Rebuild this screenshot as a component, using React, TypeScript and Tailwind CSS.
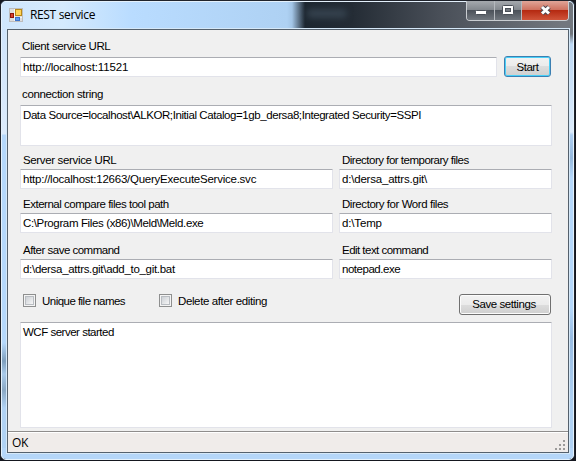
import type { ReactNode } from "react";

function Label({ children, className = "" }: { children: ReactNode; className?: string }) {
  return <div className={`whitespace-pre leading-[14px] ${className}`}>{children}</div>;
}

function Box({ children, className = "" }: { children?: ReactNode; className?: string }) {
  return (
    <div
      className={`whitespace-pre rounded-[1px] border border-[#e2e3ea] border-t-[#abadb3] bg-white pl-[2px] pt-[2px] leading-[14px] ${className}`}
    >
      {children}
    </div>
  );
}

function CheckBox() {
  return (
    <span className="block h-[13px] w-[13px] border border-[#8e8f8f] bg-[#f4f4f4] p-[1px]">
      <span className="block h-[9px] w-[9px] border border-[#b9bdc2] bg-linear-to-br from-[#cdd1d6] to-[#f6f6f6]" />
    </span>
  );
}

function FormIcon() {
  return (
    <svg width="14" height="14" viewBox="0 0 14 14" className="block">
      <rect x="0.5" y="0.5" width="13" height="13" fill="#dedede" stroke="#bdbdbd" />
      <path d="M5.5 1V13M1 9.5H13" stroke="#f4f4f4" />
      <rect x="1.5" y="5.5" width="3" height="4" fill="#d8402c" stroke="#8e140c" />
      <rect x="6.5" y="1.5" width="6" height="6" fill="#ffd358" stroke="#b98a17" />
      <rect x="6.5" y="9.5" width="4" height="3" fill="#5e9bf0" stroke="#3c74cc" />
    </svg>
  );
}

function CaptionButtons() {
  return (
    <div className="flex h-[20px] w-[103px] overflow-hidden rounded-b-[4px] border border-t-0 border-[#c9cdd1]">
      <div className="flex w-[28px] justify-center border-r border-[#b5b9be] bg-[linear-gradient(#a5a9ae_0,#84898f_45%,#4c525a_50%,#70767d_100%)]">
        <svg width="12" height="20" viewBox="0 0 12 20"><rect x="0.5" y="9.5" width="11" height="4" rx="1" fill="#fff" stroke="#4a5058" /></svg>
      </div>
      <div className="flex w-[27px] justify-center border-r border-[#b5b9be] bg-[linear-gradient(#a5a9ae_0,#84898f_45%,#4c525a_50%,#70767d_100%)]">
        <svg width="12" height="20" viewBox="0 0 12 20"><rect x="0.5" y="4.5" width="11" height="9" rx="1" fill="#fff" stroke="#4a5058" /><rect x="3.5" y="7.5" width="5" height="3" fill="#73787f" stroke="#4a5058" /></svg>
      </div>
      <div className="flex flex-1 justify-center bg-[linear-gradient(#e0a598_0,#cf7361_45%,#b52a12_50%,#d0543a_100%)]">
        <svg width="13" height="20" viewBox="0 0 13 20">
          <path d="M3 6L10 12.5M10 6L3 12.5" stroke="#4c4650" strokeWidth="5" />
          <path d="M3 6L10 12.5M10 6L3 12.5" stroke="#fff" strokeWidth="3" />
        </svg>
      </div>
    </div>
  );
}

function Grip() {
  return (
    <svg width="12" height="12" viewBox="0 0 12 12" className="block" fill="#9c9a99">
      <rect x="8" y="0" width="2" height="2" />
      <rect x="4" y="4" width="2" height="2" />
      <rect x="8" y="4" width="2" height="2" />
      <rect x="0" y="8" width="2" height="2" />
      <rect x="4" y="8" width="2" height="2" />
      <rect x="8" y="8" width="2" height="2" />
    </svg>
  );
}

export default function App() {
  return (
    <div className="h-[461px] w-[576px] overflow-hidden bg-[#15171f] font-['Liberation_Sans',Arial,sans-serif] text-[11.5px] text-black">
      <div className="flex h-[460px] w-[575px] flex-col rounded-[6px] border border-[#20242c] bg-[#b5d6f8]">
        <div className="relative flex h-[459px] flex-col rounded-[5px] border border-[#e4f1fc] pb-[5px] pl-[4px] pr-[3px]">
          <div className="absolute left-0 top-[26px] h-[420px] w-[4px] bg-[linear-gradient(#cfe4fb_0,#dcebfb_106px,#b5d8fb_107px,#b5d8fb_315px,#7f9fbd_333px,#a9caea_346px,#8aa8c4_362px,#b0d2f4_380px)]" />
          <div className="absolute right-0 top-[26px] h-[420px] w-[4px] bg-[linear-gradient(#70757c_0,#70757c_6px,#bcd8f4_16px,#dcebfb_104px,#aecff2_107px,#95b8dc_130px,#b5d8fb_150px,#b5d8fb_280px,#98bce2_310px,#b0d2f4_380px)]" />
          <div className="absolute inset-x-0 top-0 h-[27px] rounded-t-[4px] bg-[linear-gradient(90deg,#cfe6fc_0,#d5eafd_60px,#b9dcff_130px,#aed1f3_285px,#a3c5e6_290px,#1d2731_303px,#242c35_350px,#4a5059_440px,#72777e_560px)]" />
          <div className="absolute left-[305px] top-[7px] h-[9px] w-[40px] rounded-full bg-[#35424e] blur-[3px]" />
          <div className="relative flex h-[26px] shrink-0 items-start">
            <div className="ml-[3px] mt-[6px]"><FormIcon /></div>
            <div className="ml-[7px] mt-[5px] whitespace-pre font-['Open_Sans',sans-serif] text-[12px] leading-[16px] tracking-[-0.35px]">REST service</div>
            <div className="-mt-px ml-auto mr-px"><CaptionButtons /></div>
          </div>
          <div className="relative flex h-[426px] w-[564px] shrink-0 flex-col border border-[#d5e8f8]">
            <div className="flex h-[424px] w-[562px] flex-col border border-[#55616d] bg-[#f0f0f0]">
              <div className="h-[401px] pl-[12px]">
                <Label className="pl-[2px] pt-[9px] tracking-[-0.38px]">Client service URL</Label>
                <div className="mt-[3px] flex h-[21px]">
                  <Box className="mt-px h-[20px] w-[477px] tracking-[-0.15px]">http://localhost:11521</Box>
                  <button className="ml-[7px] h-[21px] w-[47px] rounded-[3px] border border-[#3c7fb1] bg-[linear-gradient(#f2f2f2_0,#ebebeb_50%,#dddddd_50%,#cfcfcf_100%)] leading-[18px] tracking-[-0.5px] shadow-[inset_0_0_0_1px_#48d0f8]">Start</button>
                </div>
                <Label className="pl-[2px] pt-[10px] tracking-[-0.35px]">connection string</Label>
                <Box className="mt-[4px] h-[41px] w-[532px] tracking-[-0.42px]">Data Source=localhost\ALKOR;Initial Catalog=1gb_dersa8;Integrated Security=SSPI</Box>
                <div className="flex h-[23px] pl-[3px] pt-[7px]">
                  <Label className="w-[319px] tracking-[-0.35px]">Server service URL</Label>
                  <Label className="tracking-[-0.5px]">Directory for temporary files</Label>
                </div>
                <div className="flex gap-[6px]">
                  <Box className="h-[20px] w-[313px] tracking-[-0.24px]">http://localhost:12663/QueryExecuteService.svc</Box>
                  <Box className="h-[20px] w-[213px] tracking-[-0.2px]">d:\dersa_attrs.git\</Box>
                </div>
                <div className="flex h-[24px] pl-[3px] pt-[8px]">
                  <Label className="w-[319px] tracking-[-0.48px]">External compare files tool path</Label>
                  <Label className="tracking-[-0.44px]">Directory for Word files</Label>
                </div>
                <div className="flex gap-[6px]">
                  <Box className="h-[20px] w-[313px] tracking-[-0.37px]">C:\Program Files (x86)\Meld\Meld.exe</Box>
                  <Box className="h-[20px] w-[213px] tracking-[-0.15px]">d:\Temp</Box>
                </div>
                <div className="flex h-[26px] pl-[3px] pt-[10px]">
                  <Label className="w-[319px] tracking-[-0.5px]">After save command</Label>
                  <Label className="tracking-[-0.53px]">Edit text command</Label>
                </div>
                <div className="flex gap-[6px]">
                  <Box className="h-[20px] w-[313px] tracking-[-0.3px]">d:\dersa_attrs.git\add_to_git.bat</Box>
                  <Box className="h-[20px] w-[213px] tracking-[-0.47px]">notepad.exe</Box>
                </div>
                <div className="mt-[15px] flex h-[28px] w-[531px] items-start pl-[3px]">
                  <CheckBox />
                  <Label className="ml-[6px] w-[117px] tracking-[-0.53px]">Unique file names</Label>
                  <CheckBox />
                  <Label className="ml-[6px] tracking-[-0.38px]">Delete after editing</Label>
                  <button className="ml-auto h-[21px] w-[92px] rounded-[3px] border border-[#707070] bg-[linear-gradient(#f2f2f2_0,#ebebeb_50%,#dddddd_50%,#cfcfcf_100%)] pr-[2px] leading-[19px] tracking-[-0.42px] shadow-[inset_0_0_0_1px_#fcfcfc]">Save settings</button>
                </div>
                <Box className="h-[106px] w-[532px] tracking-[-0.49px]">WCF server started</Box>
              </div>
              <div className="flex h-[21px] items-start border-t border-[#8f8d8c] bg-[#f0ecea] shadow-[inset_0_1px_0_#fff]">
                <div className="ml-[4px] mt-[3px] font-['Open_Sans',sans-serif] text-[12px] leading-[16px] tracking-[-0.4px]">OK</div>
                <div className="ml-auto mr-px mt-[8px]"><Grip /></div>
              </div>
            </div>
          </div>
        </div>
      </div>
    </div>
  );
}
